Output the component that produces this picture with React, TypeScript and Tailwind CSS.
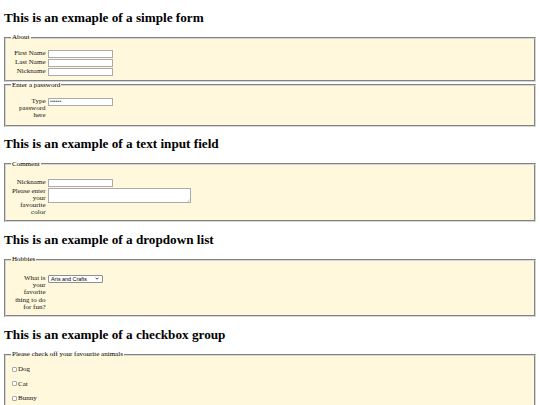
import type { ReactNode } from "react";

const serif = "font-['Liberation_Serif','Times_New_Roman',serif]";

function Heading({ children }: { children: ReactNode }) {
  return (
    <h2
      className={`mt-[9.5px] mb-[9.5px] text-[13.2px] font-bold leading-[15px] text-black ${serif}`}
    >
      {children}
    </h2>
  );
}

function Group({
  legend,
  className = "",
  children,
}: {
  legend: string;
  className?: string;
  children: ReactNode;
}) {
  return (
    <fieldset
      className={`min-w-0 border-2 border-[#d6d6d6] [border-style:groove] bg-[#fff8dc] px-[5px] ${className}`}
    >
      <legend className="px-[1px] text-[7px] leading-[7px]">{legend}</legend>
      {children}
    </fieldset>
  );
}

function Row({ label, children }: { label: string; children: ReactNode }) {
  return (
    <div className="flex items-start">
      <label className="w-[35.5px] shrink-0 pr-[1px] text-right text-[7px] leading-[7.2px] text-[#111]">
        {label}
      </label>
      <div className="ml-[1.5px]">{children}</div>
    </div>
  );
}

const inputClass =
  "block h-[8px] w-[65px] border border-[#ababab] bg-white px-[1px] font-['Liberation_Sans',Arial,sans-serif] text-[5.4px] text-[#555] outline-none";

const ANIMALS = ["Dog", "Cat", "Bunny"];

export default function App() {
  return (
    <div className={`flex min-h-screen flex-col bg-white px-[4px] pb-[30px] text-black ${serif}`}>
      <Heading>This is an exmaple of a simple form</Heading>
      <Group legend="About" className="pt-[8.5px] pb-[4px]">
        <div className="flex flex-col gap-[1px]">
          <Row label="First Name">
            <input type="text" className={inputClass} />
          </Row>
          <Row label="Last Name">
            <input type="text" className={inputClass} />
          </Row>
          <Row label="Nickname">
            <input type="text" className={inputClass} />
          </Row>
        </div>
      </Group>
      <Group legend="Enter a password" className="pt-[9px] pb-[5.5px]">
        <Row label="Type password here">
          <input type="password" defaultValue="secret" className={inputClass} />
        </Row>
      </Group>

      <Heading>This is an example of a text input field</Heading>
      <Group legend="Comment" className="pt-[11px] pb-[4px]">
        <div className="flex flex-col gap-[1px]">
          <Row label="Nickname">
            <input type="text" className={inputClass} />
          </Row>
          <Row label="Please enter your favourite color">
            <div className="relative">
              <textarea className="block h-[15.5px] w-[143px] resize-none border border-[#ababab] bg-white outline-none" />
              <svg
                viewBox="0 0 4 4"
                className="absolute bottom-[1px] right-[1px] h-[3px] w-[3px]"
              >
                <path d="M0.5 3.5 L3.5 0.5 M2 3.5 L3.5 2" stroke="#9a9a9a" strokeWidth="0.6" />
              </svg>
            </div>
          </Row>
        </div>
      </Group>

      <Heading>This is an example of a dropdown list</Heading>
      <Group legend="Hobbies" className="pt-[11.5px] pb-[4.5px]">
        <Row label="What is your favorite thing to do for fun?">
          <div className="relative w-[55px]">
            <select
              defaultValue="arts"
              className="block h-[8px] w-[55px] appearance-none rounded-[1px] border border-[#8f8f8f] bg-white pl-[2px] font-['Liberation_Sans',Arial,sans-serif] text-[5.4px] leading-[6px] text-black outline-none"
            >
              <option value="arts">Arts and Crafts</option>
              <option value="sports">Sports</option>
              <option value="reading">Reading</option>
            </select>
            <svg
              viewBox="0 0 6 4"
              className="pointer-events-none absolute right-[4px] top-[2.5px] h-[3px] w-[4px]"
            >
              <path d="M0.8 0.8 L3 3 L5.2 0.8" fill="none" stroke="#222" strokeWidth="1.2" />
            </svg>
          </div>
        </Row>
      </Group>

      <Heading>This is an example of a checkbox group</Heading>
      <Group legend="Please check off your favourite animals" className="pt-[7px] pb-[20px]">
        <div className="flex flex-col gap-[6.5px]">
          {ANIMALS.map((animal) => (
            <label key={animal} className="flex h-[8px] items-center text-[7px] text-[#111]">
              <input
                type="checkbox"
                className="ml-[1px] mr-[1px] h-[5px] w-[5px] appearance-none rounded-[1px] border border-[#a8a8a8] bg-white"
              />
              {animal}
            </label>
          ))}
        </div>
      </Group>
    </div>
  );
}
